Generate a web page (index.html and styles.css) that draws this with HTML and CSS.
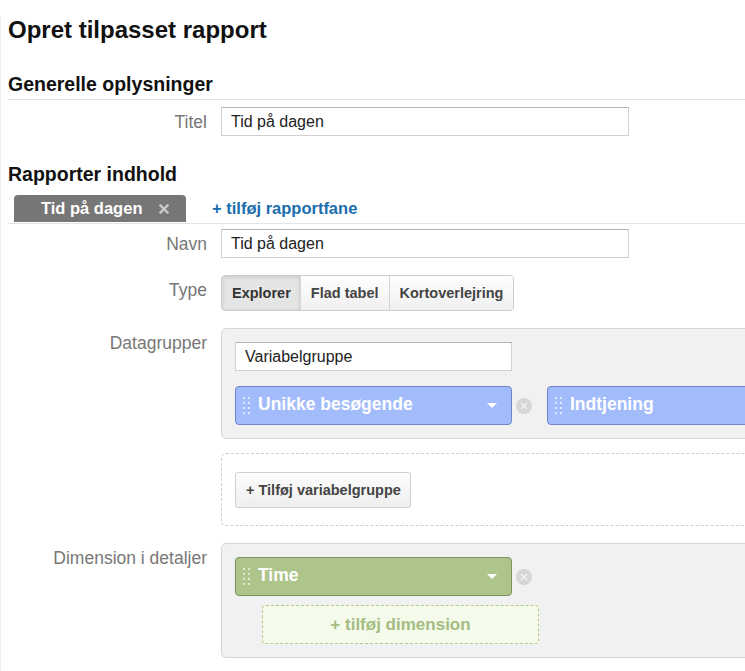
FILE: index.html
```html
<!DOCTYPE html>
<html lang="da">
<head>
<meta charset="utf-8">
<title>Opret tilpasset rapport</title>
<link rel="stylesheet" href="styles.css">
</head>
<body>
<div class="page">
  <h1 class="page-title">Opret tilpasset rapport</h1>

  <h2 class="section-title">Generelle oplysninger</h2>
  <div class="form-row form-row--first">
    <label class="field-label">Titel</label>
    <div class="field"><input class="text-input" type="text" value="Tid på dagen"></div>
  </div>

  <h2 class="section-title section-title--plain">Rapporter indhold</h2>
  <div class="tabs">
    <div class="tab">
      <span class="tab-label">Tid på dagen</span>
      <svg class="tab-close" viewBox="0 0 10 10" aria-hidden="true"><path d="M1.5 1.5L8.5 8.5M8.5 1.5L1.5 8.5" stroke="#cacaca" stroke-width="2.4" stroke-linecap="square"/></svg>
    </div>
    <a class="add-tab" href="#">+ tilføj rapportfane</a>
  </div>

  <div class="form-row form-row--after-tabs">
    <label class="field-label">Navn</label>
    <div class="field"><input class="text-input" type="text" value="Tid på dagen"></div>
  </div>

  <div class="form-row">
    <label class="field-label">Type</label>
    <div class="field">
      <div class="seg">
        <span class="seg-btn seg-btn--active">Explorer</span>
        <span class="seg-btn">Flad tabel</span>
        <span class="seg-btn">Kortoverlejring</span>
      </div>
    </div>
  </div>

  <div class="form-row">
    <label class="field-label">Datagrupper</label>
    <div class="field field--clip">
      <div class="group-box">
        <input class="text-input group-name" type="text" value="Variabelgruppe">
        <div class="pill-row">
          <div class="pill pill--blue">
            <svg class="handle" viewBox="0 0 7 18" aria-hidden="true"><g fill="#dfe7fd"><rect x="0" y="0" width="2" height="2"/><rect x="5" y="0" width="2" height="2"/><rect x="0" y="5" width="2" height="2"/><rect x="5" y="5" width="2" height="2"/><rect x="0" y="10" width="2" height="2"/><rect x="5" y="10" width="2" height="2"/><rect x="0" y="15" width="2" height="2"/><rect x="5" y="15" width="2" height="2"/></g></svg>
            <span class="pill-label">Unikke besøgende</span>
            <svg class="caret" viewBox="0 0 10 5" aria-hidden="true"><path d="M0 0H10L5 5Z" fill="#fff"/></svg>
          </div>
          <svg class="remove" viewBox="0 0 16 16" aria-hidden="true"><circle cx="8" cy="8" r="8" fill="#d6d6d6"/><path d="M5 5L11 11M11 5L5 11" stroke="#f2f2f2" stroke-width="1.6"/></svg>
          <div class="pill pill--blue pill--second">
            <svg class="handle" viewBox="0 0 7 18" aria-hidden="true"><g fill="#dfe7fd"><rect x="0" y="0" width="2" height="2"/><rect x="5" y="0" width="2" height="2"/><rect x="0" y="5" width="2" height="2"/><rect x="5" y="5" width="2" height="2"/><rect x="0" y="10" width="2" height="2"/><rect x="5" y="10" width="2" height="2"/><rect x="0" y="15" width="2" height="2"/><rect x="5" y="15" width="2" height="2"/></g></svg>
            <span class="pill-label">Indtjening</span>
          </div>
        </div>
      </div>
      <div class="add-group-box">
        <span class="btn">+ Tilføj variabelgruppe</span>
      </div>
    </div>
  </div>

  <div class="form-row">
    <label class="field-label">Dimension i detaljer</label>
    <div class="field field--clip">
      <div class="group-box group-box--dim">
        <div class="pill-row pill-row--first">
          <div class="pill pill--green">
            <svg class="handle" viewBox="0 0 7 18" aria-hidden="true"><g fill="#e0e8d3"><rect x="0" y="0" width="2" height="2"/><rect x="5" y="0" width="2" height="2"/><rect x="0" y="5" width="2" height="2"/><rect x="5" y="5" width="2" height="2"/><rect x="0" y="10" width="2" height="2"/><rect x="5" y="10" width="2" height="2"/><rect x="0" y="15" width="2" height="2"/><rect x="5" y="15" width="2" height="2"/></g></svg>
            <span class="pill-label">Time</span>
            <svg class="caret" viewBox="0 0 10 5" aria-hidden="true"><path d="M0 0H10L5 5Z" fill="#fff"/></svg>
          </div>
          <svg class="remove" viewBox="0 0 16 16" aria-hidden="true"><circle cx="8" cy="8" r="8" fill="#d6d6d6"/><path d="M5 5L11 11M11 5L5 11" stroke="#f2f2f2" stroke-width="1.6"/></svg>
        </div>
        <div class="add-dimension">+ tilføj dimension</div>
      </div>
    </div>
  </div>
</div>
</body>
</html>
```
FILE: styles.css
```css
html, body {
  margin: 0;
  padding: 0;
  background: #fff;
  overflow: hidden;
}

body {
  font-family: "Liberation Sans", Arial, Helvetica, sans-serif;
  color: #222;
}

.page {
  box-sizing: border-box;
  width: 745px;
  height: 671px;
  padding-left: 7px;
  border-left: 1px solid #ececec;
}

.page-title {
  margin: 16px 0 0;
  font-size: 24px;
  line-height: 28px;
  font-weight: bold;
  color: #111;
}

.section-title {
  margin: 28px 0 0;
  padding-bottom: 3px;
  border-bottom: 1px solid #e3e3e3;
  font-size: 19.5px;
  line-height: 24px;
  font-weight: bold;
  color: #111;
}

.section-title--plain {
  margin-top: 26px;
  padding-bottom: 0;
  border-bottom: 0;
}

.form-row {
  display: grid;
  grid-template-columns: 199px 1fr;
  column-gap: 14px;
  margin-top: 17px;
}

.form-row--first {
  margin-top: 7px;
}

.form-row--after-tabs {
  margin-top: 5px;
}

.field-label {
  text-align: right;
  font-size: 17.5px;
  line-height: 28px;
  padding-top: 1px;
  color: #777;
  white-space: nowrap;
}

.field {
  min-width: 0;
}

.field--clip {
  overflow: hidden;
}

.text-input {
  display: block;
  box-sizing: border-box;
  width: 408px;
  height: 29px;
  margin: 0;
  padding: 0 9px;
  border: 1px solid #d0d0d0;
  border-top-color: #b3b3b3;
  border-radius: 0;
  background: #fff;
  font-family: "Liberation Sans", Arial, Helvetica, sans-serif;
  font-size: 16px;
  color: #222;
  outline: none;
}

/* Tabs */
.tabs {
  display: flex;
  align-items: flex-start;
  height: 28px;
  margin-top: 9px;
  padding-left: 6px;
  border-bottom: 1px solid #e3e3e3;
}

.tab {
  display: flex;
  align-items: center;
  box-sizing: border-box;
  width: 172px;
  height: 27px;
  padding-left: 27px;
  background: #777;
  border-radius: 4px 4px 0 0;
  color: #fff;
  font-size: 16.5px;
  font-weight: bold;
}

.tab-close {
  width: 10px;
  height: 10px;
  margin-left: 17px;
}

.add-tab {
  margin-left: 26px;
  line-height: 27px;
  font-size: 16.5px;
  font-weight: bold;
  color: #1b6eae;
  text-decoration: none;
}

/* Segmented type switch */
.seg {
  display: flex;
  width: max-content;
  height: 36px;
  box-sizing: border-box;
  border: 1px solid #cdcdcd;
  border-radius: 4px;
  overflow: hidden;
}

.seg-btn {
  padding: 0 10px;
  font-size: 14.5px;
  font-weight: bold;
  line-height: 34px;
  color: #444;
  background: linear-gradient(#fefefe, #f0f0f0);
}

.seg-btn + .seg-btn {
  border-left: 1px solid #d4d4d4;
}

.seg-btn--active {
  padding: 0 9px 0 10px;
  background: #e5e5e5;
  box-shadow: inset 0 1px 4px rgba(0, 0, 0, 0.13);
  color: #333;
}

/* Group boxes */
.group-box {
  box-sizing: border-box;
  width: 580px;
  padding: 13px;
  border: 1px solid #d6d6d6;
  border-radius: 5px;
  background: #f1f1f1;
}

.group-name {
  width: 277px;
}

.pill-row {
  display: flex;
  align-items: center;
  margin-top: 15px;
}

.pill-row--first {
  margin-top: 0;
}

.pill {
  display: flex;
  align-items: center;
  flex: none;
  box-sizing: border-box;
  width: 277px;
  height: 39px;
  padding: 0 14px 2px 7px;
  border: 1px solid #6e87c5;
  border-radius: 4px;
  color: #fff;
  font-size: 17.5px;
  font-weight: bold;
}

.pill--blue {
  background: #a2bcfb;
}

.pill--green {
  background: #adc48b;
  border-color: #7d9260;
}

.pill--second {
  margin-left: 15px;
}

.handle {
  flex: none;
  width: 7px;
  height: 18px;
  margin: 2px 8px 0 0;
}

.pill-label {
  flex: 1;
  white-space: nowrap;
}

.caret {
  flex: none;
  width: 10px;
  height: 5px;
  margin-top: 2px;
}

.remove {
  flex: none;
  width: 16px;
  height: 16px;
  margin-left: 4px;
}

.add-group-box {
  box-sizing: border-box;
  width: 580px;
  margin-top: 14px;
  padding: 18px 13px 17px;
  border: 1px dashed #cfcfcf;
  border-radius: 5px;
}

.btn {
  display: inline-block;
  box-sizing: border-box;
  height: 36px;
  padding: 0 9px 0 10px;
  border: 1px solid #d0d0d0;
  border-radius: 3px;
  background: linear-gradient(#fdfdfd, #eeeeee);
  font-size: 14.5px;
  font-weight: bold;
  line-height: 34px;
  color: #444;
}

.add-dimension {
  box-sizing: border-box;
  width: 277px;
  height: 39px;
  margin: 9px 0 0 27px;
  border: 1px dashed #b3c88f;
  border-radius: 4px;
  background: #f4fbea;
  text-align: center;
  font-size: 17px;
  font-weight: bold;
  line-height: 37px;
  color: #a5bc82;
}
```
